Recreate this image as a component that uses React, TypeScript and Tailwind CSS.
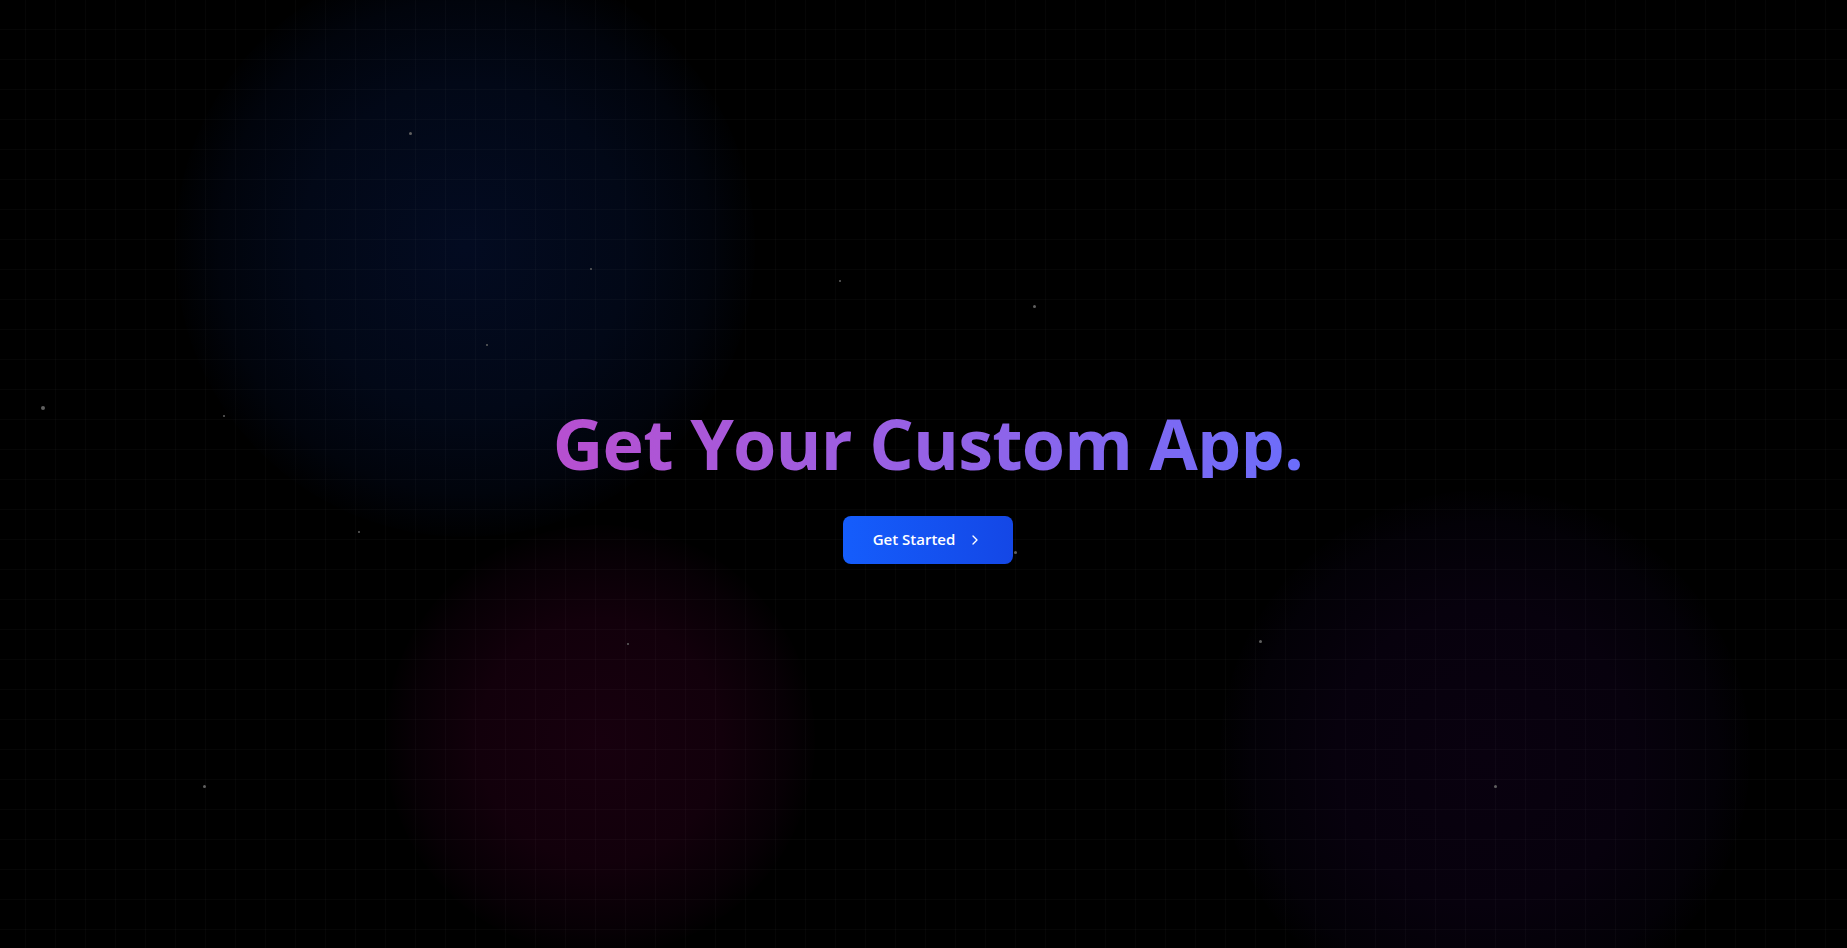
import React from 'react';
import { ChevronRight } from 'lucide-react';

const particles = [
  { x: 409, y: 132, s: 3 },
  { x: 590, y: 268, s: 2 },
  { x: 839, y: 280, s: 2 },
  { x: 1033, y: 305, s: 3 },
  { x: 486, y: 344, s: 2 },
  { x: 41, y: 406, s: 4 },
  { x: 223, y: 415, s: 2 },
  { x: 358, y: 531, s: 2 },
  { x: 1014, y: 551, s: 3 },
  { x: 627, y: 643, s: 2 },
  { x: 1259, y: 640, s: 3 },
  { x: 203, y: 785, s: 3 },
  { x: 1494, y: 785, s: 3 },
];

export default function App() {
  return (
    <div className="relative min-h-screen w-full overflow-hidden bg-black font-['Open_Sans',sans-serif]">
      {/* Glow blobs */}
      <div className="pointer-events-none absolute left-[175px] top-[-43px] h-[580px] w-[580px] rounded-full bg-[radial-gradient(circle,#030b21_0%,#020817_40%,#01040c_60%,transparent_72%)]" />
      <div className="pointer-events-none absolute left-[385px] top-[525px] h-[430px] w-[430px] rounded-full bg-[radial-gradient(circle,#17000e_0%,#12000b_40%,#070005_62%,transparent_72%)]" />
      <div className="pointer-events-none absolute left-[1220px] top-[490px] h-[530px] w-[530px] rounded-full bg-[radial-gradient(circle,#09010f_0%,#07010d_40%,#030107_62%,transparent_72%)]" />

      {/* Grid overlay */}
      <div className="pointer-events-none absolute inset-0 bg-[linear-gradient(to_right,rgba(255,255,255,0.022)_1px,transparent_1px),linear-gradient(to_bottom,rgba(255,255,255,0.022)_1px,transparent_1px)] bg-[size:30px_30px] bg-[position:25px_29px]" />

      {/* Particles */}
      {particles.map((p, i) => (
        <span
          key={i}
          className="absolute rounded-full bg-[#606060]"
          style={{ left: p.x, top: p.y, width: p.s, height: p.s }}
        />
      ))}

      <div className="relative z-10 flex min-h-screen flex-col items-center justify-center pl-[9px] pt-[23px]">
        <h1 className="bg-linear-to-r from-[#b74fd0] to-[#6b6dfb] bg-clip-text text-[70px] font-bold leading-none tracking-[-0.8px] text-transparent">
          Get Your Custom App.
        </h1>
        <button className="mt-[38px] flex h-12 w-[170px] items-center justify-center gap-3 rounded-lg bg-linear-to-r from-[#155dfc] to-[#1447e6] text-[15px] font-semibold text-white">
          Get Started
          <ChevronRight className="h-4 w-4" strokeWidth={2} />
        </button>
      </div>
    </div>
  );
}
